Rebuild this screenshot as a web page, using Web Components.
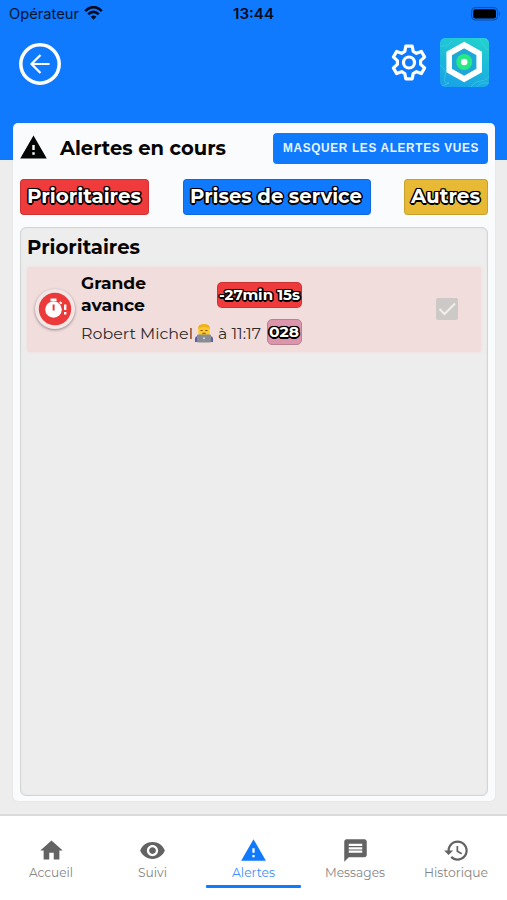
<!DOCTYPE html>
<html lang="fr">
<head>
<meta charset="utf-8">
<title>Alertes en cours</title>
<style>
html,body{margin:0;padding:0;height:100%;overflow:hidden}
body{font-family:"Montserrat","Inter","Open Sans",sans-serif;color:#050505}
</style>
</head>
<body>
<alert-app></alert-app>
<script>
const define = (name, html, setup) => {
  const t = document.createElement('template');
  t.innerHTML = html;
  customElements.define(name, class extends HTMLElement {
    connectedCallback() {
      if (this.shadowRoot) return;
      this.attachShadow({mode: 'open'}).appendChild(t.content.cloneNode(true));
      if (setup) setup(this, this.shadowRoot);
    }
  });
};

const icons = {
  warn: '<path d="M1 21h22L12 2 1 21zm12-3h-2v-2h2v2zm0-4h-2v-4h2v4z"/>',
  home: '<path d="M10 20v-6h4v6h5v-8h3L12 3 2 12h3v8z"/>',
  eye: '<path d="M12 4.500C7 4.500 2.730 7.610 1 12c1.730 4.390 6 7.500 11 7.500s9.270-3.110 11-7.500c-1.730-4.390-6-7.500-11-7.500zM12 17c-2.760 0-5-2.240-5-5s2.240-5 5-5 5 2.240 5 5-2.240 5-5 5zm0-8c-1.660 0-3 1.340-3 3s1.340 3 3 3 3-1.340 3-3-1.340-3-3-3z"/>',
  message: '<path d="M20 2H4c-1.100 0-1.990.9-1.990 2L2 22l4-4h14c1.100 0 2-.9 2-2V4c0-1.100-.9-2-2-2zm-2 12H6v-2h12v2zm0-3H6V9h12v2zm0-3H6V6h12v2z"/>',
  history: '<path d="M13 3c-4.970 0-9 4.030-9 9H1l3.890 3.890.07.14L9 12H6c0-3.870 3.130-7 7-7s7 3.130 7 7-3.130 7-7 7c-1.930 0-3.680-.79-4.940-2.060l-1.420 1.420C8.270 19.990 10.510 21 13 21c4.970 0 9-4.030 9-9s-4.030-9-9-9zm-1 5v5l4.280 2.540.72-1.210-3.500-2.080V8H12z"/>'
};

/* Icon glyph on a 24-unit grid */
define('ui-icon', `<style>:host{display:block;flex:none}svg{display:block;width:100%;height:100%;fill:currentColor}</style><svg viewBox="0 0 24 24"></svg>`,
  (el, r) => { r.querySelector('svg').innerHTML = icons[el.getAttribute('name')] || ''; });

define('status-bar', `<style>
:host{display:grid;grid-template-columns:1fr auto 1fr;align-items:center;height:27px;padding:0 6px 0 9px;color:#04142e;font-family:Inter,sans-serif}
.l{display:flex;align-items:center;gap:5px;font-size:14.500px}
.t{font-size:14.500px;font-weight:600;color:#000a1c;margin-right:3px}
.r{justify-self:end}svg{display:block}.l svg{margin-top:-1px}
</style>
<div class="l"><fit-text w="70">Opérateur</fit-text>
<svg width="19" height="14" viewBox="0 0 19 14" fill="none" stroke="#000a1c" stroke-width="2.700"><path d="M1.300 5.100C6-.2 13-.2 17.700 5.100"/><path d="M4.300 8.300c3-3.200 7.400-3.200 10.400 0"/><path d="M9.500 13.800L6.600 10.700c1.700-1.500 4.100-1.500 5.800 0z" fill="#000a1c" stroke="none"/></svg></div>
<div class="t"><fit-text w="41">13:44</fit-text></div>
<svg class="r" width="30" height="14" viewBox="0 0 30 14"><rect x=".6" y=".6" width="26" height="12.400" rx="3.600" fill="none" stroke="#084a9e"/><rect x="2.200" y="2.200" width="22.800" height="9.300" rx="2.200" fill="#000"/><path d="M28 4.800q2.200 2 0 4z" fill="#084a9e"/></svg>`);

define('app-header', `<style>
:host{display:block;height:159.500px;background:#107aff}
.bar{display:flex;align-items:center;padding:11px 18px 0 19px}
.sp{flex:1}svg{display:block;flex:none}.gear{margin-right:13.500px}
</style>
<status-bar></status-bar>
<div class="bar">
<svg width="42" height="42" viewBox="0 0 42 42" style="margin-top:3px" fill="none" stroke="#fff"><circle cx="21" cy="21" r="19.200" stroke-width="3.500"/><path d="M30.500 21H12.500M21.500 12l-9 9 9 9" stroke-width="2.200"/></svg>
<span class="sp"></span>
<svg class="gear" width="36" height="37" viewBox="0 0 36 37" fill="none" stroke="#fff" stroke-width="3.200"><circle cx="18" cy="18.500" r="5.500"/><path stroke-linejoin="round" d="M14.800 2.200h6.400l1 5.200 3.200 1.900 5-1.800 3.200 5.600-4 3.500v3.800l4 3.500-3.200 5.600-5-1.800-3.200 1.900-1 5.200h-6.400l-1-5.200-3.200-1.900-5 1.800-3.200-5.600 4-3.500v-3.800l-4-3.500 3.200-5.600 5 1.800 3.200-1.900z"/></svg>
<svg width="49" height="49" viewBox="0 0 49 49"><defs><linearGradient id="g" x1=".7" y1="0" x2=".4" y2="1"><stop offset="0" stop-color="#22d0cf"/><stop offset="1" stop-color="#18a4e6"/></linearGradient><clipPath id="c"><rect width="49" height="49" rx="5"/></clipPath></defs>
<g clip-path="url(#c)"><rect width="49" height="49" fill="url(#g)"/><g fill="none" stroke="#52d5e6" opacity=".5"><path d="M-2 7q8 4 14-4M40-2q-1 6 10 16M45-2q0 5 5 7M0 27q7 5 5 12t4 6l-7 3M30 51q3-7 11-8t10-9M37 49q3-5 12-4"/></g></g>
<path d="M24.200 7L39.200 15.500v17l-15 8.500L9.200 32.500V15.500z" fill="#1fa7d8" stroke="#fff" stroke-width="5.600"/><circle cx="24.200" cy="24" r="8" fill="#26e884"/><circle cx="24.200" cy="24" r="3.300" fill="#fff"/></svg>
</div>`);

const chip = `:host{display:flex;align-items:center;justify-content:center;box-sizing:border-box;flex:none;background:var(--bg);color:#fff;font-weight:700;
text-shadow:1.500px 0 #000,-1.500px 0 #000,0 1.500px #000,0 -1.500px #000,1.100px 1.100px #000,-1.100px 1.100px #000,1.100px -1.100px #000,-1.100px -1.100px #000,0 0 2px #0008;border:1px solid #0002}`;
define('alert-chip', `<style>${chip}:host{height:36px;border-radius:4px;font-size:19.800px;padding:0 1px 2px 0}</style><slot></slot>`);
define('alert-badge', `<style>${chip}:host{height:26px;border-radius:5px;font-size:14.300px;padding:0 1px 1px 0}</style><slot></slot>`);

define('alert-item', `<style>
:host{display:flex;box-sizing:border-box;height:85px;margin:0 6px;padding:5px 23px 0 8px;background:#f2dddd;box-shadow:0 0 4px #f2dddd;border-radius:2px}
.ic{display:block;flex:none;margin:17px 6px 0 0;border-radius:50%;width:40px;height:40px;background:#f3e6e6;box-shadow:0 1px 3px #0006}
.m{width:221px}.top{display:flex;justify-content:space-between;height:47px}
.ti{font-weight:700;font-size:16.800px;line-height:22px}
.sub{display:flex;align-items:center;height:26px;font-size:15.400px;color:#302b2b}
.sub>fit-text{margin-top:2px}
.top alert-badge{margin-top:10px;width:85px}.sub alert-badge{margin-left:6px;width:35px;border:1px solid #b58490}
.em{margin:3px 5px 0 3px;flex:none}
.ck{margin:26px 0 0 auto;width:22px;height:22px;background:#cdc9c6;border-radius:2px}
</style>
<svg class="ic" viewBox="0 0 40 40"><circle cx="20" cy="20" r="16.200" fill="#ec3939"/><g fill="#fff"><rect x="15.500" y="9.500" width="6" height="2.500"/><path d="M24 13.600l1.500-1.400 1.800 1.800-1.400 1.500z"/><circle cx="18.500" cy="20.500" r="8.300"/><rect x="29" y="15.500" width="2.400" height="5.500"/><rect x="29" y="23" width="2.400" height="2.500"/></g><rect x="17.600" y="15.500" width="2" height="6" fill="#ec3939"/></svg>
<div class="m"><div class="top"><div class="ti"><fit-text w="65">Grande</fit-text><fit-text w="64">avance</fit-text></div><alert-badge style="--bg:#ee3a3a"><fit-text w="81">-27min 15s</fit-text></alert-badge></div>
<div class="sub"><fit-text w="112">Robert Michel</fit-text>
<svg class="em" style="margin-left:2px" width="18" height="19" viewBox="0 0 18 19"><path d="M0 18v-4q1-3 9-3t9 3v4z" fill="#5a5cad"/><rect x="3.300" y="1" width="11.400" height="11" rx="3" fill="#ffc928"/><path d="M3.300 5V4q0-4 5.700-4t5.700 4v1Q12 3 9 3T3.300 5z" fill="#efb21c"/><path d="M5.500 6.500h2.200M10.300 6.500h2.200M7.300 9.300h3.400" stroke="#82511c"/><rect x="2" y="10.500" width="14" height="8" rx="1" fill="#878d92"/><circle cx="9" cy="14.200" r="1" fill="#d7dadd"/></svg>
<fit-text w="43">à 11:17</fit-text><alert-badge style="--bg:#dc95ab"><fit-text w="30">028</fit-text></alert-badge></div></div>
<svg class="ck" viewBox="0 0 22 22"><path d="M3.500 11l5 5L19 5.500" fill="none" stroke="#f3eeee" stroke-width="2"/></svg>`);

define('alert-card', `<style>
:host{display:flex;flex-direction:column;box-sizing:border-box;position:relative;height:678px;margin:-36.500px 12.500px 0 13px;padding:10px 6.500px 5px 7px;background:#f9fbfc;border-radius:5px;box-shadow:0 0 2px #0001}
.h{display:flex;align-items:center;height:30px}
ui-icon{width:29px;height:29px;margin:-2px 12px 0 -.8px}
h1,h2{margin:0;font-weight:700;font-size:19.500px;line-height:24px}
h1{margin-top:-1px}
.b{margin-left:auto;display:flex;align-items:center;justify-content:center;width:215px;height:31px;border-radius:4px;background:#107aff;color:#e9f4ff;font:700 12.300px "Liberation Sans",Arial,sans-serif;letter-spacing:.7px}
.c{display:flex;justify-content:space-between;margin:16px 0 12px}
.p{flex:1;box-sizing:border-box;border:1.500px solid #d2d5d6;border-radius:6px;background:#ededed;box-shadow:inset 0 0 2px #0001}
h2{padding:7px 6px 8px}
</style>
<div class="h"><ui-icon name="warn"></ui-icon><h1><fit-text w="166">Alertes en cours</fit-text></h1><div class="b"><fit-text w="196">MASQUER LES ALERTES VUES</fit-text></div></div>
<div class="c"><alert-chip style="--bg:#ef3b3c;width:129px"><fit-text w="114">Prioritaires</fit-text></alert-chip><alert-chip style="--bg:#107aff;width:188px"><fit-text w="172">Prises de service</fit-text></alert-chip><alert-chip style="--bg:#e7b935;width:84px"><fit-text w="69">Autres</fit-text></alert-chip></div>
<div class="p"><h2><fit-text w="113">Prioritaires</fit-text></h2><alert-item></alert-item></div>`);

define('nav-tab', `<style>
:host{display:flex;flex-direction:column;align-items:center;flex:1;box-sizing:border-box;padding-top:20.500px;color:#636363;font-size:12.300px}
.g{width:27px;height:27px}
.t{line-height:18px;color:#858585}
i{width:95px;height:3px;margin-top:3px;border-radius:1px}
:host([active]){color:#107aff}:host([active]) .t{color:#3b8fff}:host([active]) i{background:#107aff}
</style><div class="g"></div><div class="t"><slot></slot></div><i></i>`,
  (el, r) => {
    const icon = document.createElement('ui-icon');
    icon.setAttribute('name', el.getAttribute('icon'));
    r.querySelector('.g').append(icon);
  });

define('nav-bar', `<style>:host{display:flex;box-sizing:border-box;height:86px;padding-left:.5px;border-top:2px solid #dadada;background:#fff}</style>
<nav-tab icon="home"><fit-text w="44">Accueil</fit-text></nav-tab><nav-tab icon="eye"><fit-text w="29">Suivi</fit-text></nav-tab><nav-tab icon="warn" active><fit-text w="43">Alertes</fit-text></nav-tab><nav-tab icon="message"><fit-text w="60">Messages</fit-text></nav-tab><nav-tab icon="history"><fit-text w="64">Historique</fit-text></nav-tab>`);

define('alert-app', `<style>:host{display:flex;flex-direction:column;height:900px;background:#ededed}nav-bar{margin-top:auto}app-header,alert-card,nav-bar{flex:none}</style>
<app-header></app-header><alert-card></alert-card><nav-bar></nav-bar>`);

/* Text set to an exact line width through its w attribute */
define('fit-text', `<style>:host{display:block;flex:none;white-space:nowrap}span{display:inline-block;transform-origin:0 50%}</style><span><slot></slot></span>`,
  (el, r) => {
    const s = r.querySelector('span'), w = +el.getAttribute('w');
    const n = s.getBoundingClientRect().width;
    el.style.width = w + 'px';
    if (n) s.style.transform = 'scaleX(' + w / n + ')';
  });
</script>
</body>
</html>
